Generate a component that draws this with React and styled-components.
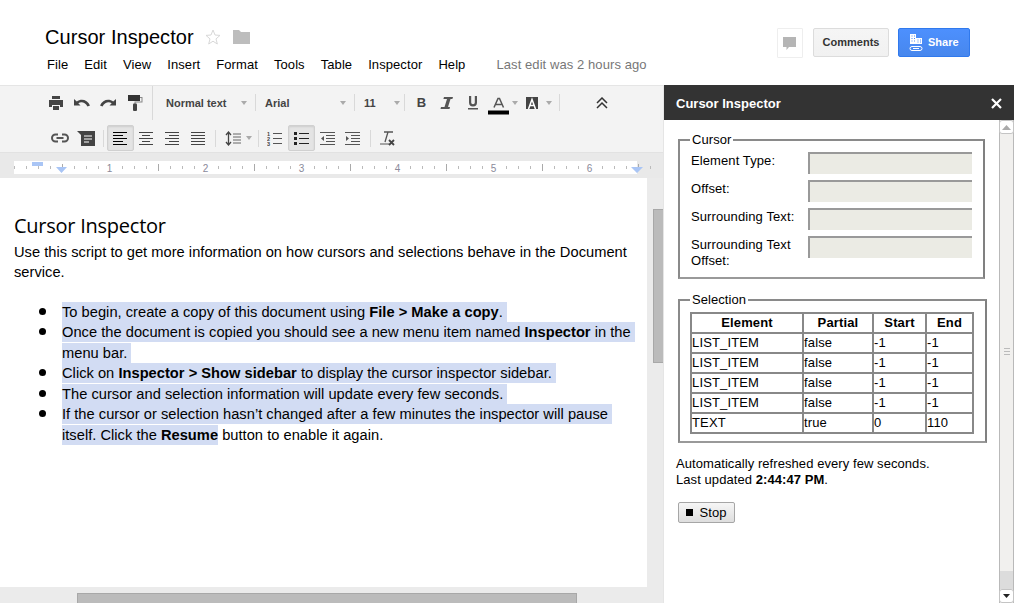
import React from "react";
import styled, { createGlobalStyle } from "styled-components";

const Global = createGlobalStyle`
  html, body { margin: 0; padding: 0; background: #fff; overflow: hidden; }
  body { font-family: "Liberation Sans", Arial, sans-serif; }
  * { box-sizing: border-box; }
`;

const Page = styled.div`
  width: 1014px; height: 603px; display: flex; flex-direction: column; overflow: hidden; background: #fff;
`;
const Header = styled.header`
  height: 86px; flex: none; border-bottom: 1px solid #e5e5e5; display: flex; justify-content: space-between; padding: 25px 44px 0 45px;
`;
const TitleBlock = styled.div`display: flex; flex-direction: column;`;
const TitleRow = styled.div`display: flex; align-items: center; height: 24px;`;
const DocTitle = styled.div`
  font-size: 20px; line-height: 24px; color: #000; width: 160px; letter-spacing: 0.05px;
`;
const StarGap = styled.span`width: 12px; flex: none;`;
const MenuRow = styled.nav`display: flex; margin-top: 8px; margin-left: 2px; font-size: 13px; line-height: 16px; color: #000; align-items: center; letter-spacing: 0.08px;`;
const MenuItem = styled.span`margin-right: 16px;`;
const LastEdit = styled.span`color: #777; margin-left: 15px;`;
const HeaderActions = styled.div`display: flex; align-items: flex-start; padding-top: 3px;`;
const ChatBox = styled.div`
  width: 26px; height: 30px; border: 1px solid #eee; display: flex; align-items: center; justify-content: center; margin-right: 10px; border-radius: 1px; padding-top: 2px;
`;
const CommentsBtn = styled.div`
  width: 76px; height: 29px; border: 1px solid #dcdcdc; border-radius: 2px; background: linear-gradient(#f5f5f5, #f1f1f1);
  color: #333; font-weight: bold; font-size: 11px; display: flex; align-items: center; justify-content: center; margin-right: 9px; padding-bottom: 2px;
`;
const ShareBtn = styled.div`
  width: 72px; height: 29px; border: 1px solid #3079ed; border-radius: 2px; background: linear-gradient(#4d90fe, #4787ed);
  color: #fff; font-weight: bold; font-size: 11px; display: flex; align-items: center; padding-left: 10px; gap: 5px;
`;
const ShareLabel = styled.span`margin-bottom: 2px;`;

const Main = styled.div`flex: 1; display: flex; min-height: 0;`;
const DocColumn = styled.div`width: 664px; flex: none; display: flex; flex-direction: column; min-height: 0; border-right: 1px solid #e5e5e5;`;
const Toolbar = styled.div`height: 66px; flex: none; background: #f3f3f3;`;
const ToolRow = styled.div`
  display: flex; height: ${p => p.$h}px; margin-top: ${p => p.$mt || 0}px; align-items: center; padding-left: ${p => p.$pad}px;
`;
const Tool = styled.div`
  width: ${p => p.$w || 26}px; height: 26px; flex: none; display: flex; align-items: center; justify-content: center;
  margin-left: ${p => p.$ml || 0}px; border-radius: 2px;
  ${p => p.$active ? "background: #e4e4e4; border: 1px solid #d0d0d0; box-shadow: inset 0 1px 2px rgba(0,0,0,.1);" : ""}
`;
const Sep = styled.div`width: 1px; height: ${p => p.$h || 17}px; background: #d9d9d9; flex: none; margin: 0 ${p => p.$r ?? 0}px 0 ${p => p.$l ?? 0}px;`;
const ToolLabel = styled.div`
  font-size: 11px; font-weight: bold; color: #444; width: ${p => p.$w}px; flex: none; margin-left: ${p => p.$ml}px;
`;
const BoldGlyph = styled.b`font-size: 13px; color: #444;`;
const Caret = styled.div`
  width: 0; height: 0; border-left: 3.5px solid transparent; border-right: 3.5px solid transparent; border-top: 4px solid #aaa; flex: none; margin-left: ${p => p.$ml || 0}px;
`;
const RulerBand = styled.div`height: 26px; flex: none; background: #e9e9e9; border-top: 1px solid #e2e2e2; padding-top: 8px; display: flex;`;
const DocArea = styled.div`flex: 1; min-height: 0; display: flex; background: #ebebeb;`;
const DocWrap = styled.div`flex: 1; display: flex; flex-direction: column; min-width: 0;`;
const Paper = styled.div`
  width: 647px; height: 409px; flex: none; background: #fff; padding: 36px 14px 0 14px; color: #000; font-size: 14.67px; line-height: 20.5px; overflow: hidden; letter-spacing: 0.02px;
`;
const Heading = styled.h1`
  font-family: "Open Sans", sans-serif; font-weight: 400; font-size: 20px; line-height: 24px; margin: 0 0 3.6px; color: #000; letter-spacing: -0.25px;
`;
const Para = styled.p`margin: 0 0 19px; width: 622px;`;
const List = styled.ul`margin: 0; padding: 0; list-style: none;`;
const Item = styled.li`
  position: relative; padding-left: 48px; width: 624px; white-space: pre-wrap;
  &::before { content: ""; position: absolute; left: 25px; top: 6px; width: 7px; height: 7px; border-radius: 50%; background: #000; }
`;
const Sel = styled.span`background: #d2dcf3; padding: 2px 0; -webkit-box-decoration-break: clone; box-decoration-break: clone;`;
const HScrollTrack = styled.div`height: 16px; flex: none; padding: 6px 0 0 77px; background: #ebebeb;`;
const HThumb = styled.div`width: 500px; height: 10px; background: #bbb; border: 1px solid #a8a8a8; border-bottom: 0;`;
const VScrollTrack = styled.div`width: 16px; flex: none; padding: 31px 0 0 6px; background: #ebebeb;`;
const VThumb = styled.div`width: 10px; height: 154px; background: #bbb; border: 1px solid #a8a8a8; border-right: 0;`;

const Sidebar = styled.aside`flex: 1; display: flex; flex-direction: column; min-width: 0; background: #fff; margin-top: -1px;`;
const SideHeader = styled.div`
  height: 35px; background: #333; color: #fff; font-size: 13px; font-weight: bold; display: flex; align-items: center; justify-content: space-between; padding: 1px 12px 0 12px; flex: none;
`;
const SideBody = styled.div`flex: 1; display: flex; min-height: 0;`;
const SideContent = styled.div`flex: 1; padding: 12px 14px 0 12px; font-size: 13px; color: #000; min-width: 0; letter-spacing: 0.07px;`;
const Fieldset = styled.fieldset`
  margin: 0 0 13px 2px; padding: 5px 11px 0 10px; border: 2px solid; border-color: #8a8a8a #808080 #999 #8a8a8a; height: ${p => p.$h}px; width: 307px;
  legend { padding: 0 2px; font-size: 13px; line-height: 15px; margin-left: 0; }
`;
const FieldRow = styled.div`display: flex; height: 28px; justify-content: space-between; line-height: 16px;`;
const FieldLabel = styled.div`width: 115px; margin: 1px 0 0 1px; letter-spacing: 0.1px;`;
const FieldInput = styled.div`width: 164px; height: 22px; background: #ebebe4; border-top: 2px solid #999; border-left: 2px solid #999;`;
const Table = styled.table`
  border-collapse: collapse; font-size: 13px; width: 283px; table-layout: fixed; letter-spacing: 0.15px;
  th, td { border: 2px solid #888; padding: 0; height: 20px; line-height: 16px; text-align: left; }
  th { text-align: center; font-weight: bold; }
`;
const Note = styled.div`line-height: 16px;`;
const StopBtn = styled.div`
  margin-top: 14px; margin-left: 2px; width: 57px; height: 21px; border: 1px solid #a6a6a6; border-radius: 2px; background: linear-gradient(#f6f6f6, #dedede);
  display: flex; align-items: center; justify-content: center; gap: 6px; font-size: 13px;
`;
const StopMark = styled.span`width: 7px; height: 7px; background: #000; display: block;`;
const SideScroll = styled.div`
  width: 15px; flex: none; border-left: 1px solid #b9b9b9; border-right: 1px solid #b9b9b9; background: #f1f0ee; display: flex; flex-direction: column; position: relative;
`;
const ScrollCap = styled.div`
  height: 14px; flex: none; background: #fff; border: 1px solid #c4c4c4; border-radius: 3px; margin: 0 -1px; display: flex; align-items: center; justify-content: center;
`;
const ScrollSpace = styled.div`flex: 1;`;
const ScrollEnd = styled.div`height: 18px; flex: none; background: #dcdcdc;`;
const Grip = styled.div`
  position: absolute; left: 4px; top: 228px; width: 6px; height: 7px; border-top: 1px solid #bbb; border-bottom: 1px solid #bbb;
  &::after { content: ""; display: block; height: 1px; margin-top: 2px; background: #bbb; }
`;

const I = ({ w = 16, h = 16, children }) => (
  <svg width={w} height={h} viewBox={`0 0 ${w} ${h}`} style={{ display: "block" }}>{children}</svg>
);
const Lines = ({ rows, color = "#444" }) => (
  <I w={15} h={13}>{rows.map(([x1, x2], i) => <rect key={i} x={x1} y={i * 3} width={x2 - x1} height={1} fill={color} />)}</I>
);

const Ruler = () => {
  const ticks = [];
  for (let k = 0; 14 + k * 12 < 660; k++) {
    const x = 14 + k * 12;
    const mod = k % 8;
    if (mod === 0 && k > 0 && k <= 48) continue;
    const tall = mod === 4;
    ticks.push(<rect key={x} x={x} y={tall ? 3 : 5} width={1} height={tall ? 7 : 3} fill={tall ? "#aaa" : "#bbb"} />);
  }
  return (
    <svg width="663" height="14" viewBox="0 0 663 14" style={{ display: "block" }}>
      <rect x="14" y="0" width="623" height="13" fill="#fff" />
      {ticks}
      <rect x="32" y="1" width="11" height="4" fill="#a9c5f5" />
      <path d="M56 6h11l-5.500 6z M631 6h12l-6 6z" fill="#a9c5f5" />
      {[1, 2, 3, 4, 5, 6].map(n => (
        <text key={n} x={14 + n * 96 - 0.5} y="10.500" fontSize="10" textAnchor="middle" fontFamily="Liberation Sans" fill="#8a8a9a">{n}</text>
      ))}
    </svg>
  );
};

export default function App() {
  return (
    <Page>
      <Global />
      <Header>
        <TitleBlock>
          <TitleRow>
            <DocTitle>Cursor Inspector</DocTitle>
            <I w={16} h={16}><path d="M8 1l2 5 5 .4-4 3.500 1.300 5.100L8 12.200 3.700 15 5 9.900 1 6.400 6 6z" fill="#fff" stroke="#d8d8d8" /></I>
            <StarGap />
            <I w={17} h={14}><path d="M0 0h6l2 2h9v12H0z" fill="#bdbdbd" /></I>
          </TitleRow>
          <MenuRow>
            <MenuItem>File</MenuItem>
            <MenuItem>Edit</MenuItem>
            <MenuItem>View</MenuItem>
            <MenuItem>Insert</MenuItem>
            <MenuItem>Format</MenuItem>
            <MenuItem>Tools</MenuItem>
            <MenuItem>Table</MenuItem>
            <MenuItem>Inspector</MenuItem>
            <MenuItem>Help</MenuItem>
            <LastEdit>Last edit was 2 hours ago</LastEdit>
          </MenuRow>
        </TitleBlock>
        <HeaderActions>
          <ChatBox>
            <I w={14} h={14}><path d="M0 0h13v10H6l-2.500 3V10H0z" fill="#b5b5b5" /></I>
          </ChatBox>
          <CommentsBtn>Comments</CommentsBtn>
          <ShareBtn>
            <I w={14} h={19}>
              <path d="M1 1h6v4h6v6H1z" fill="#fff" />
              <path d="M2.500 3h1M5 3h1M2.500 5.500h1M5 5.500h1M2.500 8h1M5 8h1M8.500 7h1M11 7h1M8.500 9h1M11 9h1" stroke="#4a8bf5" />
              <rect x="1" y="13.500" width="12" height="4" rx="2" fill="none" stroke="#fff" />
              <path d="M4 15.500h6" stroke="#fff" />
            </I>
            <ShareLabel>Share</ShareLabel>
          </ShareBtn>
        </HeaderActions>
      </Header>
      <Main>
        <DocColumn>
          <Toolbar>
            <ToolRow $pad={43} $h={33}>
              <Tool><I><path d="M4 1h8v3H4z M1 5h14v7h-3v-2H4v2H1z M5 11h6v4H5z" fill="#444" /></I></Tool>
              <Tool><I h={10}><path d="M0 1v6.500h6.500L4.300 5.300C7 3.500 11 4 13.500 8.500L16 7.500C13.500 1.500 7 .5 2.800 3.500z" fill="#444" /></I></Tool>
              <Tool><I h={10}><path d="M16 1v6.500H9.500l2.200-2.200C9 3.500 5 4 2.500 8.500L0 7.500C2.500 1.500 9 .5 13.200 3.500z" fill="#444" /></I></Tool>
              <Tool $ml={1}><I w={15} h={16}><path d="M0 0h12v6H0z" fill="#333" /><path d="M12 2h2.500v5.500H7.500V9H6.500V6.500h7V3H12z" fill="#888" /><rect x="5" y="8.500" width="4" height="7.500" rx="1" fill="#444" /></I></Tool>
              <Sep $h={34} $l={4} />
              <ToolLabel $w={75} $ml={13}>Normal text</ToolLabel>
              <Caret />
              <Sep $l={8} />
              <ToolLabel $w={75} $ml={9}>Arial</ToolLabel>
              <Caret />
              <Sep $l={8} />
              <ToolLabel $w={30} $ml={9}>11</ToolLabel>
              <Caret />
              <Sep $l={4} />
              <Tool $ml={4} $w={25}><BoldGlyph>B</BoldGlyph></Tool>
              <Tool><I h={12}><path d="M5 0h9l-.6 2H11.500L9 10h2l-.5 2H1.500L2 10h3.500L8 2H4.400z" fill="#555" /></I></Tool>
              <Tool><I h={14}><path d="M4 0h2.200v6.500a1.800 1.800 0 0 0 3.600 0V0H12v6.500a4 4 0 0 1-8 0zM3 12h10v1.500H3z" fill="#555" /></I></Tool>
              <Tool $w={24}>
                <svg width="21" height="24" viewBox="0 0 21 24" style={{ display: "block" }}><path d="M6 16.500L10 7.500h1.500l4 9M7.500 13.500h6" fill="none" stroke="#555" strokeWidth="1.500" /><rect y="19.500" width="21" height="4" fill="#000" /></svg>
              </Tool>
              <Caret $ml={2} />
              <Tool $w={22} $ml={3}><I w={12} h={12}><rect width="12" height="12" fill="#444" /><path d="M2.500 12L6 2.500 9.500 12M4 8.500h4" stroke="#fff" strokeWidth="1.500" fill="none" /></I></Tool>
              <Caret $ml={3} />
              <Sep $l={7} />
              <Tool $ml={29}><I w={12} h={12}><path d="M1 6l5-5 5 5M1 11l5-5 5 5" fill="none" stroke="#333" strokeWidth="1.500" /></I></Tool>
            </ToolRow>
            <ToolRow $pad={47} $h={28} $mt={5}>
              <Tool><I w={18} h={10}><path d="M7 1.500H4.500a3.500 3.500 0 0 0 0 7H7M11 1.500h2.500a3.500 3.500 0 0 1 0 7H11M5.500 5h7" fill="none" stroke="#555" strokeWidth="2" /></I></Tool>
              <Tool><I w={18} h={15}><path d="M0 0h18v15H4V4z" fill="#444" /><path d="M7 5h8M7 8h8M7 11h5" stroke="#fff" /></I></Tool>
              <Sep $l={4} $r={3} />
              <Tool $active $w={27}><Lines rows={[[0, 14], [0, 10], [0, 14], [0, 10], [0, 14]]} color="#000" /></Tool>
              <Tool $w={25}><Lines rows={[[0, 14], [3, 11], [0, 14], [3, 11], [0, 14]]} /></Tool>
              <Tool><Lines rows={[[0, 14], [4, 14], [0, 14], [4, 14], [0, 14]]} /></Tool>
              <Tool><Lines rows={[[0, 14], [0, 14], [0, 14], [0, 14], [0, 14]]} /></Tool>
              <Sep $l={4} />
              <Tool $w={22} $ml={6}><I h={15}><path d="M3.500 2v11M1 4l2.500-3L6 4M1 11l2.500 3L6 11" fill="none" stroke="#444" strokeWidth="1.300" /><path d="M8 3h8M8 6h8M8 9h8M8 12h8" stroke="#666" /></I></Tool>
              <Caret $ml={1.5} />
              <Sep $l={6.5} />
              <Tool $ml={3}><I h={15}><path d="M6 2.500h9M6 7.500h9M6 12.500h9" stroke="#555" /><text x="0" y="5" fontSize="5.500" fontWeight="bold" fill="#444" fontFamily="Liberation Sans">1</text><text x="0" y="10" fontSize="5.500" fontWeight="bold" fill="#444" fontFamily="Liberation Sans">2</text><text x="0" y="15" fontSize="5.500" fontWeight="bold" fill="#444" fontFamily="Liberation Sans">3</text></I></Tool>
              <Tool $active $w={27}><I h={14}><path d="M0 1h3v3H0zM0 6h3v3H0zM0 11h3v3H0z" fill="#222" /><path d="M5 2.500h10M5 7.500h10M5 12.500h10" stroke="#222" /></I></Tool>
              <Tool $w={25}><I h={13}><path d="M0 .5h15M6 3.500h9M6 6.500h9M6 9.500h9M0 12.500h15" stroke="#555" /><path d="M4 4v5L1 6.500z" fill="#555" /></I></Tool>
              <Tool><I h={13}><path d="M0 .5h15M6 3.500h9M6 6.500h9M6 9.500h9M0 12.500h15" stroke="#555" /><path d="M1 4v5l3-2.500z" fill="#555" /></I></Tool>
              <Sep $l={4} />
              <Tool $ml={3}><I w={16} h={15}><path d="M5 1h9M9 1l-3 10" fill="none" stroke="#555" strokeWidth="1.300" /><path d="M1 13h9" stroke="#555" /><path d="M10 9l5 5M15 9l-5 5" stroke="#444" strokeWidth="1.800" /></I></Tool>
            </ToolRow>
          </Toolbar>
          <RulerBand><Ruler /></RulerBand>
          <DocArea>
            <DocWrap>
              <Paper>
                <Heading>Cursor Inspector</Heading>
                <Para>Use this script to get more information on how cursors and selections behave in the Document service.</Para>
                <List>
                  <Item><Sel>To begin, create a copy of this document using <b>File &gt; Make a copy</b>. </Sel></Item>
                  <Item><Sel>Once the document is copied you should see a new menu item named <b>Inspector</b> in the menu bar. </Sel></Item>
                  <Item><Sel>Click on <b>Inspector &gt; Show sidebar</b> to display the cursor inspector sidebar. </Sel></Item>
                  <Item><Sel>The cursor and selection information will update every few seconds. </Sel></Item>
                  <Item><Sel>If the cursor or selection hasn’t changed after a few minutes the inspector will pause itself. Click the <b>Resume</b></Sel> button to enable it again.</Item>
                </List>
              </Paper>
              <HScrollTrack><HThumb /></HScrollTrack>
            </DocWrap>
            <VScrollTrack><VThumb /></VScrollTrack>
          </DocArea>
        </DocColumn>
        <Sidebar>
          <SideHeader>
            Cursor Inspector
            <I w={11} h={11}><path d="M1 1l9 9M10 1l-9 9" stroke="#fff" strokeWidth="2.200" /></I>
          </SideHeader>
          <SideBody>
            <SideContent>
              <Fieldset $h={147}>
                <legend>Cursor</legend>
                <FieldRow><FieldLabel>Element Type:</FieldLabel><FieldInput /></FieldRow>
                <FieldRow><FieldLabel>Offset:</FieldLabel><FieldInput /></FieldRow>
                <FieldRow><FieldLabel>Surrounding Text:</FieldLabel><FieldInput /></FieldRow>
                <FieldRow><FieldLabel>Surrounding Text Offset:</FieldLabel><FieldInput /></FieldRow>
              </Fieldset>
              <Fieldset $h={151}>
                <legend>Selection</legend>
                <Table>
                  <colgroup><col style={{ width: 112 }} /><col style={{ width: 70 }} /><col style={{ width: 53 }} /><col style={{ width: 47 }} /></colgroup>
                  <thead><tr><th>Element</th><th>Partial</th><th>Start</th><th>End</th></tr></thead>
                  <tbody>
                    {[0, 1, 2, 3].map(i => <tr key={i}><td>LIST_ITEM</td><td>false</td><td>-1</td><td>-1</td></tr>)}
                    <tr><td>TEXT</td><td>true</td><td>0</td><td>110</td></tr>
                  </tbody>
                </Table>
              </Fieldset>
              <Note>Automatically refreshed every few seconds.<br />Last updated <b>2:44:47 PM</b>.</Note>
              <StopBtn><StopMark />Stop</StopBtn>
            </SideContent>
            <SideScroll>
              <ScrollCap><svg width="9" height="5" style={{ display: "block" }}><path d="M0 5h9L4.500 0z" fill="#aaa" /></svg></ScrollCap>
              <ScrollSpace />
              <Grip />
              <ScrollEnd />
              <ScrollCap><svg width="7" height="4" style={{ display: "block" }}><path d="M0 0h7L3.500 4z" fill="#222" /></svg></ScrollCap>
            </SideScroll>
          </SideBody>
        </Sidebar>
      </Main>
    </Page>
  );
}
